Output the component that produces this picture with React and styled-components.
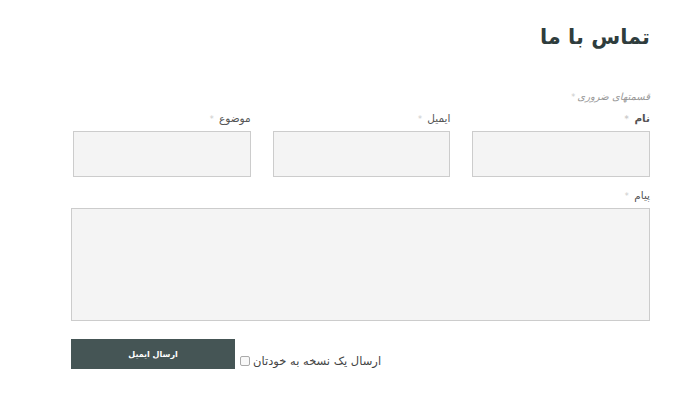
import React from 'react';
import styled, { createGlobalStyle } from 'styled-components';

const GlobalStyle = createGlobalStyle`
    html, body {
        margin: 0;
        padding: 0;
        background: #ffffff;
    }
    body {
        font-family: "DejaVu Sans", "Noto Sans", sans-serif;
    }
`;

const Page = styled.div`
    width: 700px;
    height: 400px;
    box-sizing: border-box;
    padding: 22px 50px 0 71px;
    direction: rtl;
`;

const Title = styled.h1`
    margin: 0;
    font-size: 21px;
    line-height: 30px;
    font-weight: bold;
    color: #2f3d3d;
`;

const Note = styled.p`
    margin: 38px 0 0;
    font-size: 10px;
    line-height: 14px;
    font-style: italic;
    color: #999999;
`;

const Star = styled.span`
    color: #cccccc;
    font-size: 8px;
    margin-right: 2px;
`;

const FieldRow = styled.div`
    display: grid;
    grid-template-columns: repeat(3, 1fr);
    column-gap: 22px;
    margin-top: 6px;
    padding-left: 2px;
`;

const Field = styled.div`
    display: flex;
    flex-direction: column;
    margin-top: ${props => props.top || 0}px;
`;

const Label = styled.label`
    font-size: 10.5px;
    line-height: 14px;
    font-weight: ${props => (props.strong ? 'bold' : 'normal')};
    color: #555555;
    margin-bottom: 4px;
`;

const Input = styled.div`
    box-sizing: border-box;
    height: 46px;
    border: 1px solid #cccccc;
    background: #f4f4f4;
`;

const TextArea = styled(Input)`
    height: 113px;
`;

const Actions = styled.div`
    display: flex;
    direction: ltr;
    align-items: flex-end;
    margin-top: 18px;
`;

const SendButton = styled.button`
    width: 164px;
    height: 30px;
    border: none;
    background: #455555;
    color: #ffffff;
    font-family: inherit;
    font-size: 8px;
    font-weight: bold;
    direction: rtl;
`;

const CopyLabel = styled.label`
    display: flex;
    align-items: center;
    gap: 3px;
    margin-left: 5px;
    margin-bottom: 1px;
    font-size: 11.5px;
    color: #444444;
    direction: ltr;
`;

const Box = styled.span`
    display: inline-block;
    width: 8px;
    height: 8px;
    border: 1px solid #aaaaaa;
    border-radius: 2px;
    background: #f8f8f8;
`;

const App = () => {
    return (
        <Page>
            <GlobalStyle />
            <Title>تماس با ما</Title>
            <Note>قسمتهای ضروری<Star>*</Star></Note>
            <FieldRow>
                <Field>
                    <Label strong>نام <Star>*</Star></Label>
                    <Input />
                </Field>
                <Field>
                    <Label>ایمیل <Star>*</Star></Label>
                    <Input />
                </Field>
                <Field>
                    <Label>موضوع <Star>*</Star></Label>
                    <Input />
                </Field>
            </FieldRow>
            <Field top={11}>
                <Label>پیام <Star>*</Star></Label>
                <TextArea />
            </Field>
            <Actions>
                <SendButton>ارسال ایمیل</SendButton>
                <CopyLabel>
                    <Box />
                    <span dir="rtl">ارسال یک نسخه به خودتان</span>
                </CopyLabel>
            </Actions>
        </Page>
    );
};

export default App;
